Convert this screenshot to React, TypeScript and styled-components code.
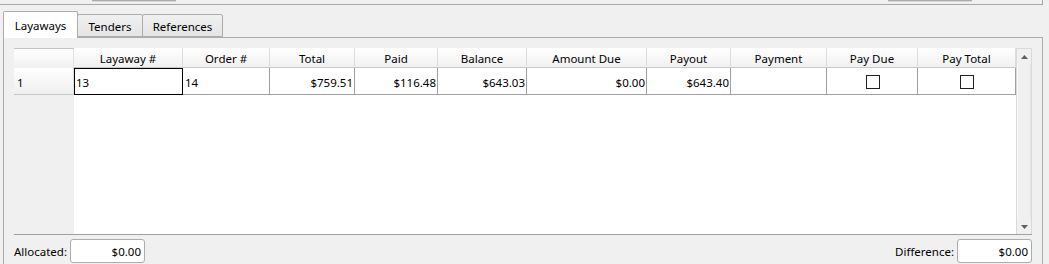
import React from "react";
import styled, { createGlobalStyle } from "styled-components";

const GlobalStyle = createGlobalStyle`
  html, body {
    margin: 0;
    padding: 0;
    background: #f0f0f0;
  }
  body {
    font-family: "Segoe UI", "Noto Sans", "Open Sans", sans-serif;
    font-size: 11.5px;
    color: #000;
  }
`;

interface Column {
  title: string;
  width: number;
}

const columns: Column[] = [
  { title: "Layaway #", width: 109 },
  { title: "Order #", width: 87 },
  { title: "Total", width: 85 },
  { title: "Paid", width: 83 },
  { title: "Balance", width: 89 },
  { title: "Amount Due", width: 120 },
  { title: "Payout", width: 84 },
  { title: "Payment", width: 96 },
  { title: "Pay Due", width: 91 },
  { title: "Pay Total", width: 98 },
];

type CellValue = { text?: string; align?: "left" | "right"; check?: boolean; focus?: boolean };

const row: CellValue[] = [
  { text: "13", align: "left", focus: true },
  { text: "14", align: "left" },
  { text: "$759.51", align: "right" },
  { text: "$116.48", align: "right" },
  { text: "$643.03", align: "right" },
  { text: "$0.00", align: "right" },
  { text: "$643.40", align: "right" },
  { text: "" },
  { check: true },
  { check: true },
];

const Window = styled.div`
  width: 1049px;
  height: 264px;
  overflow: hidden;
  background: #f0f0f0;
`;

const TopFrame = styled.div`
  width: 1042px;
  height: 4px;
  border-bottom: 1px solid #a8a8a8;
  border-right: 1px solid #a8a8a8;
  display: flex;
  align-items: flex-start;
`;

const ButtonStub = styled.div<{ $left: number; $width: number }>`
  margin-left: ${(p) => p.$left}px;
  width: ${(p) => p.$width}px;
  height: 1px;
  background: #acacac;
  border-bottom: 1px solid #d8d8d8;
`;

const Tabs = styled.div`
  margin: 6px 0 0 3px;
`;

const TabBar = styled.div`
  display: flex;
  align-items: flex-end;
  height: 26px;
  position: relative;
  z-index: 1;
`;

const Tab = styled.div<{ $active?: boolean; $width: number }>`
  box-sizing: border-box;
  width: ${(p) => p.$width}px;
  height: ${(p) => (p.$active ? 27 : 23)}px;
  margin-bottom: ${(p) => (p.$active ? -1 : 0)}px;
  margin-left: ${(p) => (p.$active ? 0 : -1)}px;
  border: 1px solid #acacac;
  border-bottom: ${(p) => (p.$active ? "none" : "1px solid #acacac")};
  border-radius: 2px 2px 0 0;
  background: ${(p) => (p.$active ? "#ffffff" : "linear-gradient(#f0f0f0, #e5e5e5)")};
  display: flex;
  align-items: center;
  justify-content: center;
  padding-top: ${(p) => (p.$active ? 1 : 2)}px;
  &:first-child {
    margin-left: 0;
  }
`;

const Pane = styled.div`
  width: 1040px;
  height: 240px;
  box-sizing: border-box;
  border: 1px solid #acacac;
  border-bottom: none;
  background: #f0f0f0;
  padding: 10px 10px 0 10px;
  display: flex;
  flex-direction: column;
`;

const Table = styled.div`
  display: flex;
  height: 186px;
  border-bottom: 1px solid #a0a0a0;
`;

const TableBody = styled.div`
  flex: 1;
  display: flex;
  flex-direction: column;
  background: #fff;
`;

const HeaderRow = styled.div`
  display: flex;
  height: 20px;
  background: #f0f0f0;
`;

const Corner = styled.div`
  box-sizing: border-box;
  width: 60px;
  height: 20px;
  border-top: 1px solid #c4c4c4;
  border-right: 1px solid #e2e2e2;
  background: linear-gradient(#ffffff, #f1f1f1);
`;

const HeaderCell = styled.div<{ $width: number }>`
  box-sizing: border-box;
  width: ${(p) => p.$width}px;
  height: 20px;
  border-right: 1px solid #dcdcdc;
  border-bottom: 1px solid #c8c8c8;
  background: linear-gradient(#ffffff, #f1f1f1);
  display: flex;
  align-items: center;
  justify-content: center;
  padding-top: 1px;
  white-space: nowrap;
`;

const DataArea = styled.div`
  flex: 1;
  display: flex;
`;

const RowHeaders = styled.div`
  width: 60px;
  background: #f0f0f0;
`;

const RowHeader = styled.div`
  box-sizing: border-box;
  height: 27px;
  padding: 2px 0 0 3px;
  display: flex;
  align-items: center;
  border-bottom: 1px solid #c8c8c8;
  border-right: 1px solid #e2e2e2;
  background: linear-gradient(#ffffff, #efefef);
`;

const Rows = styled.div`
  flex: 1;
  background: #fff;
`;

const DataRow = styled.div`
  display: flex;
  height: 27px;
`;

const Cell = styled.div<{ $width: number; $align?: string; $focus?: boolean }>`
  box-sizing: border-box;
  width: ${(p) => p.$width}px;
  height: 27px;
  border-right: 1px solid #a0a0a0;
  border-bottom: 1px solid #a0a0a0;
  ${(p) => (p.$focus ? "border: 1px solid #000; border-right-color: #000;" : "")}
  display: flex;
  align-items: center;
  justify-content: ${(p) => (p.$align === "right" ? "flex-end" : p.$align === "left" ? "flex-start" : "center")};
  padding: ${(p) => (p.$focus ? "2px 1px 0 1px" : "2px 1px 0 2px")};
  white-space: nowrap;
`;

const CheckBox = styled.div`
  width: 14px;
  height: 14px;
  box-sizing: border-box;
  border: 1px solid #222;
  background: #fff;
`;

const ScrollBar = styled.div`
  box-sizing: border-box;
  width: 16px;
  display: flex;
  flex-direction: column;
  border: 1px solid #dadada;
  border-bottom: none;
  background: #f0f0f0;
`;

const ScrollButton = styled.div`
  height: 15px;
  display: flex;
  align-items: center;
  justify-content: center;
  background: #f0f0f0;
`;

const Track = styled.div`
  flex: 1;
  border-left: 1px solid #fafafa;
  border-right: 1px solid #e4e4e4;
  background: #f0f0f0;
`;

const Footer = styled.div`
  display: flex;
  justify-content: space-between;
  align-items: center;
  margin-top: 4px;
`;

const Field = styled.div`
  display: flex;
  align-items: center;
  gap: 3px;
`;

const Label = styled.span`
  padding-top: 1px;
`;

const Input = styled.div`
  box-sizing: border-box;
  width: 75px;
  height: 24px;
  border: 1px solid #adadad;
  border-radius: 3px;
  background: #fff;
  display: flex;
  align-items: center;
  justify-content: flex-end;
  padding: 1px 3px 0 0;
`;

const Arrow = ({ up }: { up?: boolean }) => (
  <svg width="7" height="4" viewBox="0 0 7 4">
    <path d={up ? "M0 4 L3.5 0 L7 4 Z" : "M0 0 L3.5 4 L7 0 Z"} fill="#606060" />
  </svg>
);

export default function App() {
  return (
    <Window>
      <GlobalStyle />
      <TopFrame>
        <ButtonStub $left={92} $width={84} />
        <ButtonStub $left={712} $width={84} />
      </TopFrame>
      <Tabs>
        <TabBar>
          <Tab $active $width={75}>Layaways</Tab>
          <Tab $width={66}>Tenders</Tab>
          <Tab $width={81}>References</Tab>
        </TabBar>
        <Pane>
          <Table>
            <TableBody>
              <HeaderRow>
                <Corner />
                {columns.map((c) => (
                  <HeaderCell key={c.title} $width={c.width}>
                    {c.title}
                  </HeaderCell>
                ))}
              </HeaderRow>
              <DataArea>
                <RowHeaders>
                  <RowHeader>1</RowHeader>
                </RowHeaders>
                <Rows>
                  <DataRow>
                    {row.map((v, i) => (
                      <Cell key={i} $width={columns[i].width} $align={v.align} $focus={v.focus}>
                        {v.check ? <CheckBox /> : v.text}
                      </Cell>
                    ))}
                  </DataRow>
                </Rows>
              </DataArea>
            </TableBody>
            <ScrollBar>
              <ScrollButton>
                <Arrow up />
              </ScrollButton>
              <Track />
              <ScrollButton>
                <Arrow />
              </ScrollButton>
            </ScrollBar>
          </Table>
          <Footer>
            <Field>
              <Label>Allocated:</Label>
              <Input>$0.00</Input>
            </Field>
            <Field>
              <Label>Difference:</Label>
              <Input>$0.00</Input>
            </Field>
          </Footer>
        </Pane>
      </Tabs>
    </Window>
  );
}
